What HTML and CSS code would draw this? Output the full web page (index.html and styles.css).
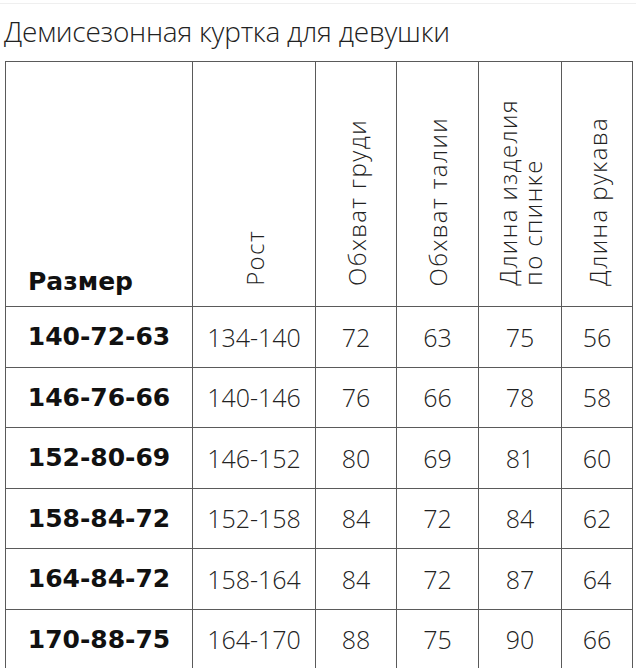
FILE: index.html
```html
<!DOCTYPE html>
<html lang="ru">
<head>
<meta charset="utf-8">
<title>Демисезонная куртка для девушки</title>
<link rel="stylesheet" href="styles.css">
</head>
<body>
<div class="topline"></div>
<h1 class="title">Демисезонная куртка для девушки</h1>
<table class="sizes">
  <colgroup>
    <col class="c-size">
    <col class="c-height">
    <col class="c-chest">
    <col class="c-waist">
    <col class="c-length">
    <col class="c-sleeve">
  </colgroup>
  <thead>
    <tr>
      <th class="size-head">Размер</th>
      <th class="vhead"><span class="vt">Рост</span></th>
      <th class="vhead"><span class="vt">Обхват груди</span></th>
      <th class="vhead"><span class="vt">Обхват талии</span></th>
      <th class="vhead"><span class="vt">Длина изделия<br>по спинке</span></th>
      <th class="vhead"><span class="vt">Длина рукава</span></th>
    </tr>
  </thead>
  <tbody>
    <tr><th class="size">140-72-63</th><td>134-140</td><td>72</td><td>63</td><td>75</td><td>56</td></tr>
    <tr><th class="size">146-76-66</th><td>140-146</td><td>76</td><td>66</td><td>78</td><td>58</td></tr>
    <tr><th class="size">152-80-69</th><td>146-152</td><td>80</td><td>69</td><td>81</td><td>60</td></tr>
    <tr><th class="size">158-84-72</th><td>152-158</td><td>84</td><td>72</td><td>84</td><td>62</td></tr>
    <tr><th class="size">164-84-72</th><td>158-164</td><td>84</td><td>72</td><td>87</td><td>64</td></tr>
    <tr><th class="size">170-88-75</th><td>164-170</td><td>88</td><td>75</td><td>90</td><td>66</td></tr>
  </tbody>
</table>
</body>
</html>
```
FILE: styles.css
```css
html, body {
  margin: 0;
  padding: 0;
  background: #fff;
}

body {
  font-family: "Open Sans", "Liberation Sans", sans-serif;
  color: #222;
  overflow: hidden;
}

.topline {
  margin-top: 3px;
  height: 1px;
  background: #efefef;
}

.title {
  margin: 10px 0 13px 4px;
  font-size: 28px;
  line-height: 34px;
  font-weight: 300;
  letter-spacing: -0.25px;
  color: #222;
}

.sizes {
  margin-left: 5px;
  width: 628px;
  table-layout: fixed;
  border-collapse: collapse;
  border-right: 1px solid #d0d0d0;
}

.c-size { width: 187px; }
.c-height { width: 123px; }
.c-chest { width: 81px; }
.c-waist { width: 82px; }
.c-length { width: 83px; }
.c-sleeve { width: 71px; }

.sizes th,
.sizes td {
  border: 1px solid #5a5a5a;
  padding: 0;
  text-align: center;
  vertical-align: middle;
}

.sizes thead tr {
  height: 245px;
}

.sizes tbody tr {
  height: 60.5px;
}

.size-head {
  vertical-align: bottom !important;
  text-align: left !important;
  padding: 0 0 12px 22px !important;
  font-family: "DejaVu Sans", "Liberation Sans", sans-serif;
  font-weight: bold;
  font-size: 25px;
  line-height: 25px;
  color: #111;
}

.vhead {
  vertical-align: bottom !important;
  padding-bottom: 15px !important;
}

.vt {
  display: inline-block;
  writing-mode: vertical-rl;
  transform: rotate(180deg);
  text-align: left;
  font-weight: 300;
  font-size: 24px;
  line-height: 25px;
  letter-spacing: 1.4px;
  color: #222;
  white-space: nowrap;
}

.size {
  font-family: "DejaVu Sans", "Liberation Sans", sans-serif;
  font-weight: bold;
  font-size: 25px;
  color: #111;
}

.sizes td {
  font-weight: 300;
  font-size: 25px;
  color: #222;
}
```
